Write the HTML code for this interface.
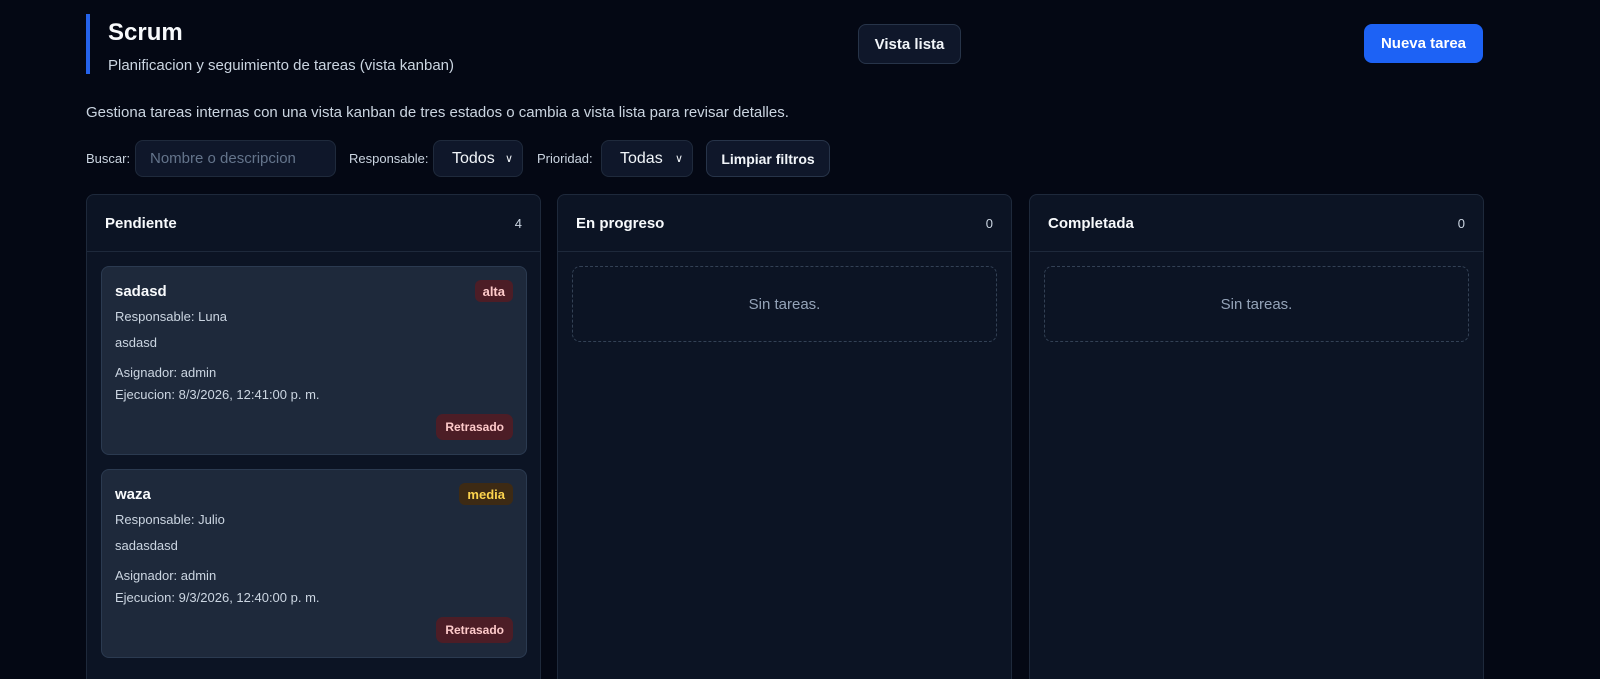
<!DOCTYPE html>
<html style="height:679px;overflow:hidden"><head><meta charset="utf-8"><style>
*{box-sizing:border-box;margin:0;padding:0}
body{width:1600px;height:679px;overflow:hidden;background:#040814;font-family:"Liberation Sans",sans-serif;color:#e5e7eb;position:relative}
.abs{position:absolute}
.bar{left:86px;top:14px;width:4px;height:60px;background:#2563eb}
h1{position:absolute;left:108px;top:19px;font-size:24px;font-weight:bold;color:#f8fafc}
.sub{left:108px;top:57px;font-size:15px;color:#cbd5e1}
.desc{left:86px;top:104px;font-size:15px;color:#cbd5e1}
.btn{position:absolute;border-radius:8px;font-size:15px;font-weight:bold;display:flex;align-items:center;justify-content:center}
.dark{background:#0f172a;border:1px solid #273449;color:#f1f5f9}
.blue{background:#1d62f5;color:#fff}
.lbl{position:absolute;top:151px;font-size:13px;color:#cbd5e1}
.inp{position:absolute;top:140px;height:37px;background:#0f172a;border:1px solid #1f2a3c;border-radius:8px;font-size:16px;display:flex;align-items:center}
.col{position:absolute;top:194px;height:485px;width:455px;background:#0c1424;border:1px solid #1e293b;border-bottom:none;border-radius:8px 8px 0 0}
.ch{height:57px;border-bottom:1px solid #1e293b;display:flex;align-items:center;justify-content:space-between;padding:0 18px;font-size:15px;font-weight:bold;color:#f8fafc}
.ch span{font-size:13px;color:#cbd5e1;font-weight:normal}
.empty{position:absolute;left:14px;top:71px;right:14px;height:76px;border:1px dashed #334155;border-radius:8px;display:flex;align-items:center;justify-content:center;color:#94a3b8;font-size:15px}
.card{position:absolute;left:14px;width:426px;height:189px;background:#1e293b;border:1px solid #2b3a50;border-radius:8px;font-size:13px;color:#cbd5e1}
.card .t{position:absolute;left:13px;top:16px;font-size:15px;font-weight:bold;color:#f8fafc}
.card .l{position:absolute;left:13px}
.tag{position:absolute;right:13px;top:13px;height:22px;padding:0 8px;border-radius:6px;font-size:13px;font-weight:bold;display:flex;align-items:center}
.ret{position:absolute;right:13px;bottom:14px;height:26px;padding:0 9px;border-radius:7px;background:#4c1d26;color:#fecaca;font-size:12px;font-weight:bold;display:flex;align-items:center}
</style></head><body>
<div class="abs bar"></div>
<h1>Scrum</h1>
<div class="abs sub">Planificacion y seguimiento de tareas (vista kanban)</div>
<div class="btn dark" style="left:858px;top:24px;width:103px;height:40px">Vista lista</div>
<div class="btn blue" style="left:1364px;top:24px;width:119px;height:39px">Nueva tarea</div>
<div class="abs desc">Gestiona tareas internas con una vista kanban de tres estados o cambia a vista lista para revisar detalles.</div>
<div class="lbl" style="left:86px">Buscar:</div>
<div class="inp" style="left:135px;width:201px;padding-left:14px;color:#64748b;font-size:15px">Nombre o descripcion</div>
<div class="lbl" style="left:349px">Responsable:</div>
<div class="inp" style="left:433px;width:90px;padding-left:18px;color:#f1f5f9">Todos<span style="position:absolute;right:9px;font-size:11px">&#x2228;</span></div>
<div class="lbl" style="left:537px">Prioridad:</div>
<div class="inp" style="left:601px;width:92px;padding-left:18px;color:#f1f5f9">Todas<span style="position:absolute;right:9px;font-size:11px">&#x2228;</span></div>
<div class="btn dark" style="left:706px;top:140px;width:124px;height:37px;font-size:14px">Limpiar filtros</div>

<div class="col" style="left:86px">
 <div class="ch">Pendiente<span>4</span></div>
 <div class="card" style="top:71px">
  <div class="t">sadasd</div><div class="tag" style="background:#4c1d26;color:#fecaca">alta</div>
  <div class="l" style="top:42px">Responsable: Luna</div>
  <div class="l" style="top:68px">asdasd</div>
  <div class="l" style="top:98px">Asignador: admin</div>
  <div class="l" style="top:120px">Ejecucion: 8/3/2026, 12:41:00 p. m.</div>
  <div class="ret">Retrasado</div>
 </div>
 <div class="card" style="top:274px">
  <div class="t">waza</div><div class="tag" style="background:#3d2a14;color:#fcd34d">media</div>
  <div class="l" style="top:42px">Responsable: Julio</div>
  <div class="l" style="top:68px">sadasdasd</div>
  <div class="l" style="top:98px">Asignador: admin</div>
  <div class="l" style="top:120px">Ejecucion: 9/3/2026, 12:40:00 p. m.</div>
  <div class="ret">Retrasado</div>
 </div>
</div>
<div class="col" style="left:557px">
 <div class="ch">En progreso<span>0</span></div>
 <div class="empty">Sin tareas.</div>
</div>
<div class="col" style="left:1029px">
 <div class="ch">Completada<span>0</span></div>
 <div class="empty">Sin tareas.</div>
</div>
</body></html>
